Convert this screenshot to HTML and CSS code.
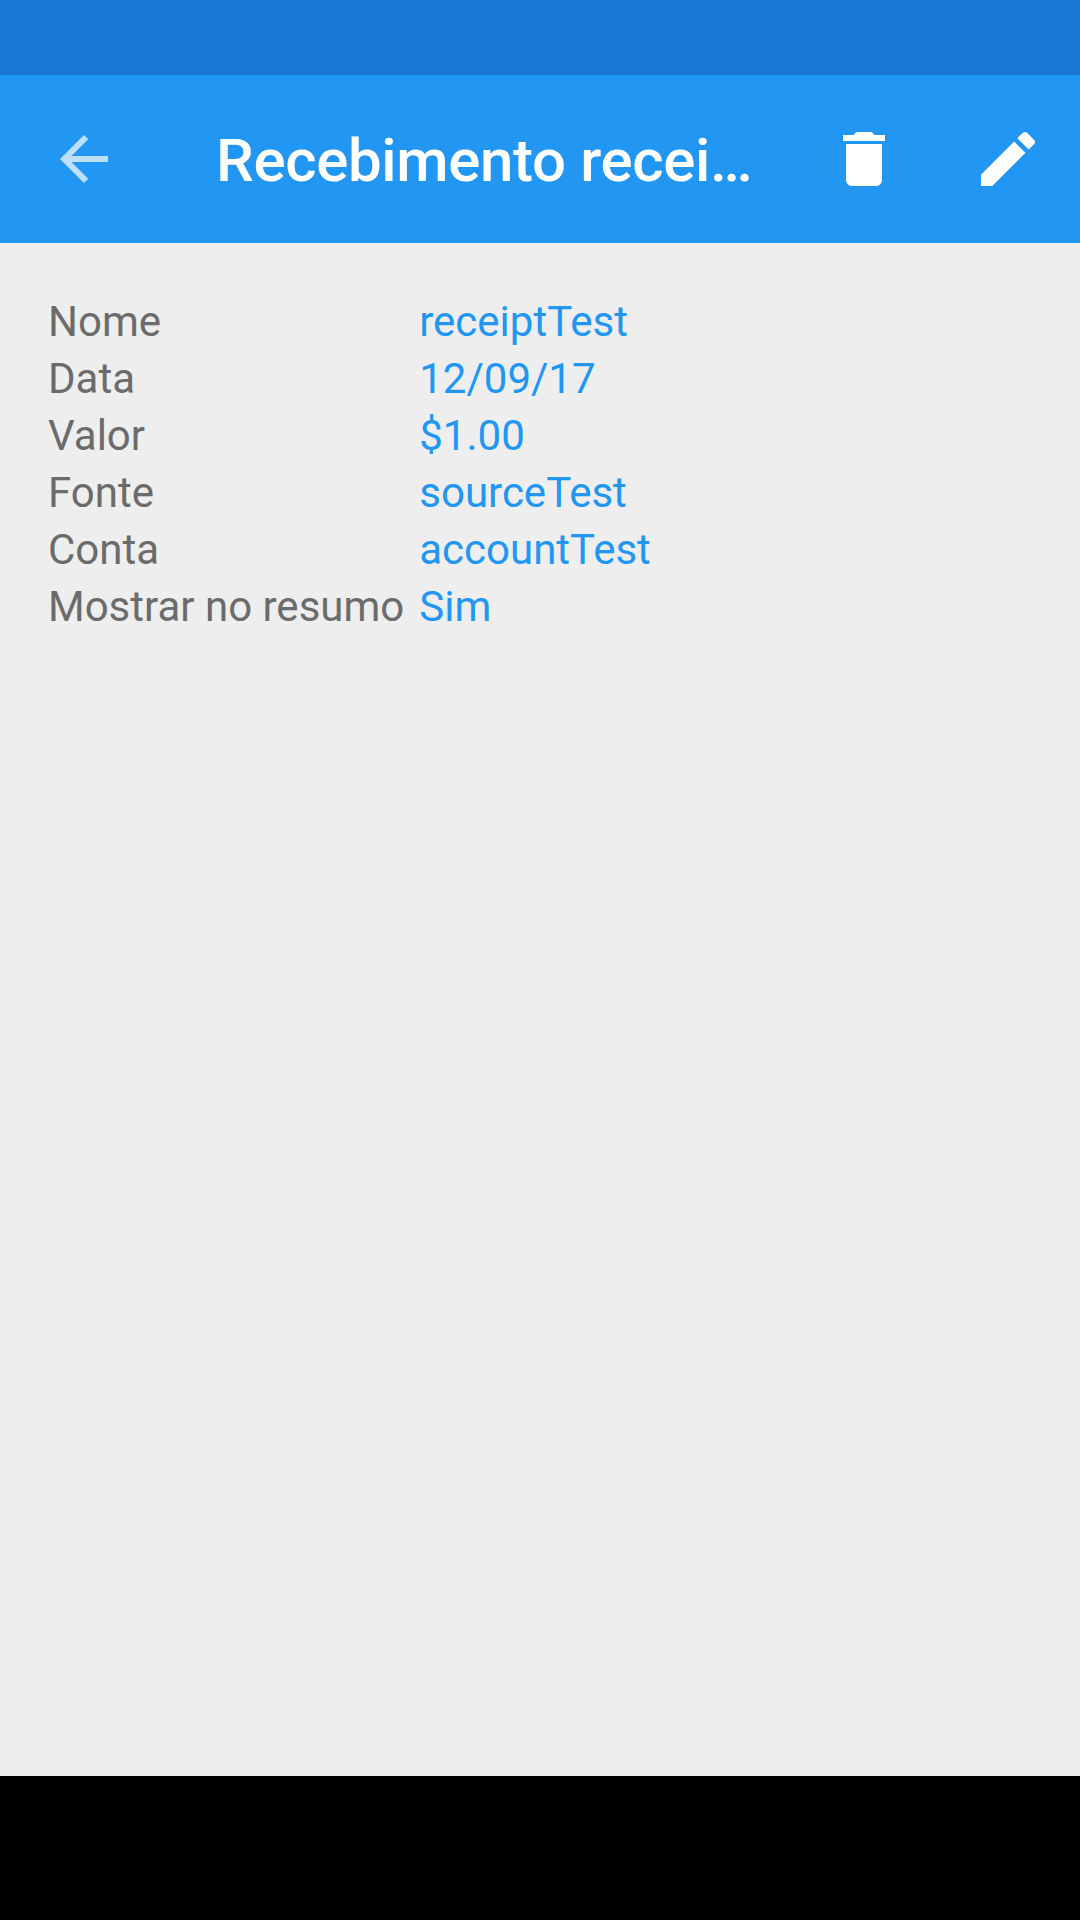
FILE: index.html
```html
<!DOCTYPE html>
<html lang="en">
<head>
    <meta charset="UTF-8">
    <meta name="viewport" content="width=device-width, initial-scale=1.0">
    <title>Recebimento</title>
    <link rel="stylesheet" href="styles.css">
</head>
<body>
    <div class="status-bar"></div>
    <header class="toolbar">
        <button class="icon-button back">
            <svg viewBox="0 0 24 24"><path d="M20 11H7.83l5.59-5.59L12 4l-8 8 8 8 1.41-1.41L7.83 13H20v-2z"/></svg>
        </button>
        <div class="title">Recebimento recei…</div>
        <button class="icon-button delete">
            <svg viewBox="0 0 24 24"><path d="M6 19c0 1.1.9 2 2 2h8c1.1 0 2-.9 2-2V7H6v12zM19 4h-3.5l-1-1h-5l-1 1H5v2h14V4z"/></svg>
        </button>
        <button class="icon-button edit">
            <svg viewBox="0 0 24 24"><path d="M3 17.25V21h3.75L17.81 9.94l-3.75-3.75L3 17.25zM20.71 7.04c.39-.39.39-1.02 0-1.41l-2.34-2.34c-.39-.39-1.02-.39-1.41 0l-1.83 1.83 3.75 3.75 1.83-1.83z"/></svg>
        </button>
    </header>
    <main class="content">
        <div class="details">
            <div class="label">Nome</div>
            <div class="value">receiptTest</div>
            <div class="label">Data</div>
            <div class="value">12/09/17</div>
            <div class="label">Valor</div>
            <div class="value">$1.00</div>
            <div class="label">Fonte</div>
            <div class="value">sourceTest</div>
            <div class="label">Conta</div>
            <div class="value">accountTest</div>
            <div class="label">Mostrar no resumo</div>
            <div class="value">Sim</div>
        </div>
    </main>
    <div class="nav-bar"></div>
</body>
</html>
```

FILE: styles.css
```css
* {
    margin: 0;
    padding: 0;
    box-sizing: border-box;
}

body {
    width: 1080px;
    height: 1920px;
    display: flex;
    flex-direction: column;
    overflow: hidden;
    background: #eeeeee;
    font-family: Roboto, sans-serif;
}

.status-bar {
    height: 75px;
    background: #1976d2;
}

.toolbar {
    height: 168px;
    display: flex;
    align-items: center;
    padding: 0 36px 0 48px;
    background: #2196f3;
}

.icon-button {
    width: 72px;
    height: 72px;
    flex: none;
    border: none;
    background: none;
}

.icon-button svg {
    display: block;
    width: 72px;
    height: 72px;
    fill: #fff;
}

.back svg {
    opacity: 0.7;
}

.edit {
    margin-left: 72px;
}

.title {
    flex: 1;
    margin-left: 96px;
    padding-top: 2px;
    color: #fff;
    font-size: 60px;
    font-weight: 500;
    letter-spacing: -0.35px;
    white-space: nowrap;
}

.content {
    flex: 1;
    padding: 50px 48px;
}

.details {
    display: grid;
    grid-template-columns: auto 1fr;
    column-gap: 15px;
    font-size: 42px;
    line-height: 57px;
}

.label {
    color: #6b6b6b;
}

.value {
    color: #2196f3;
}

.nav-bar {
    height: 144px;
    background: #000;
}
```
